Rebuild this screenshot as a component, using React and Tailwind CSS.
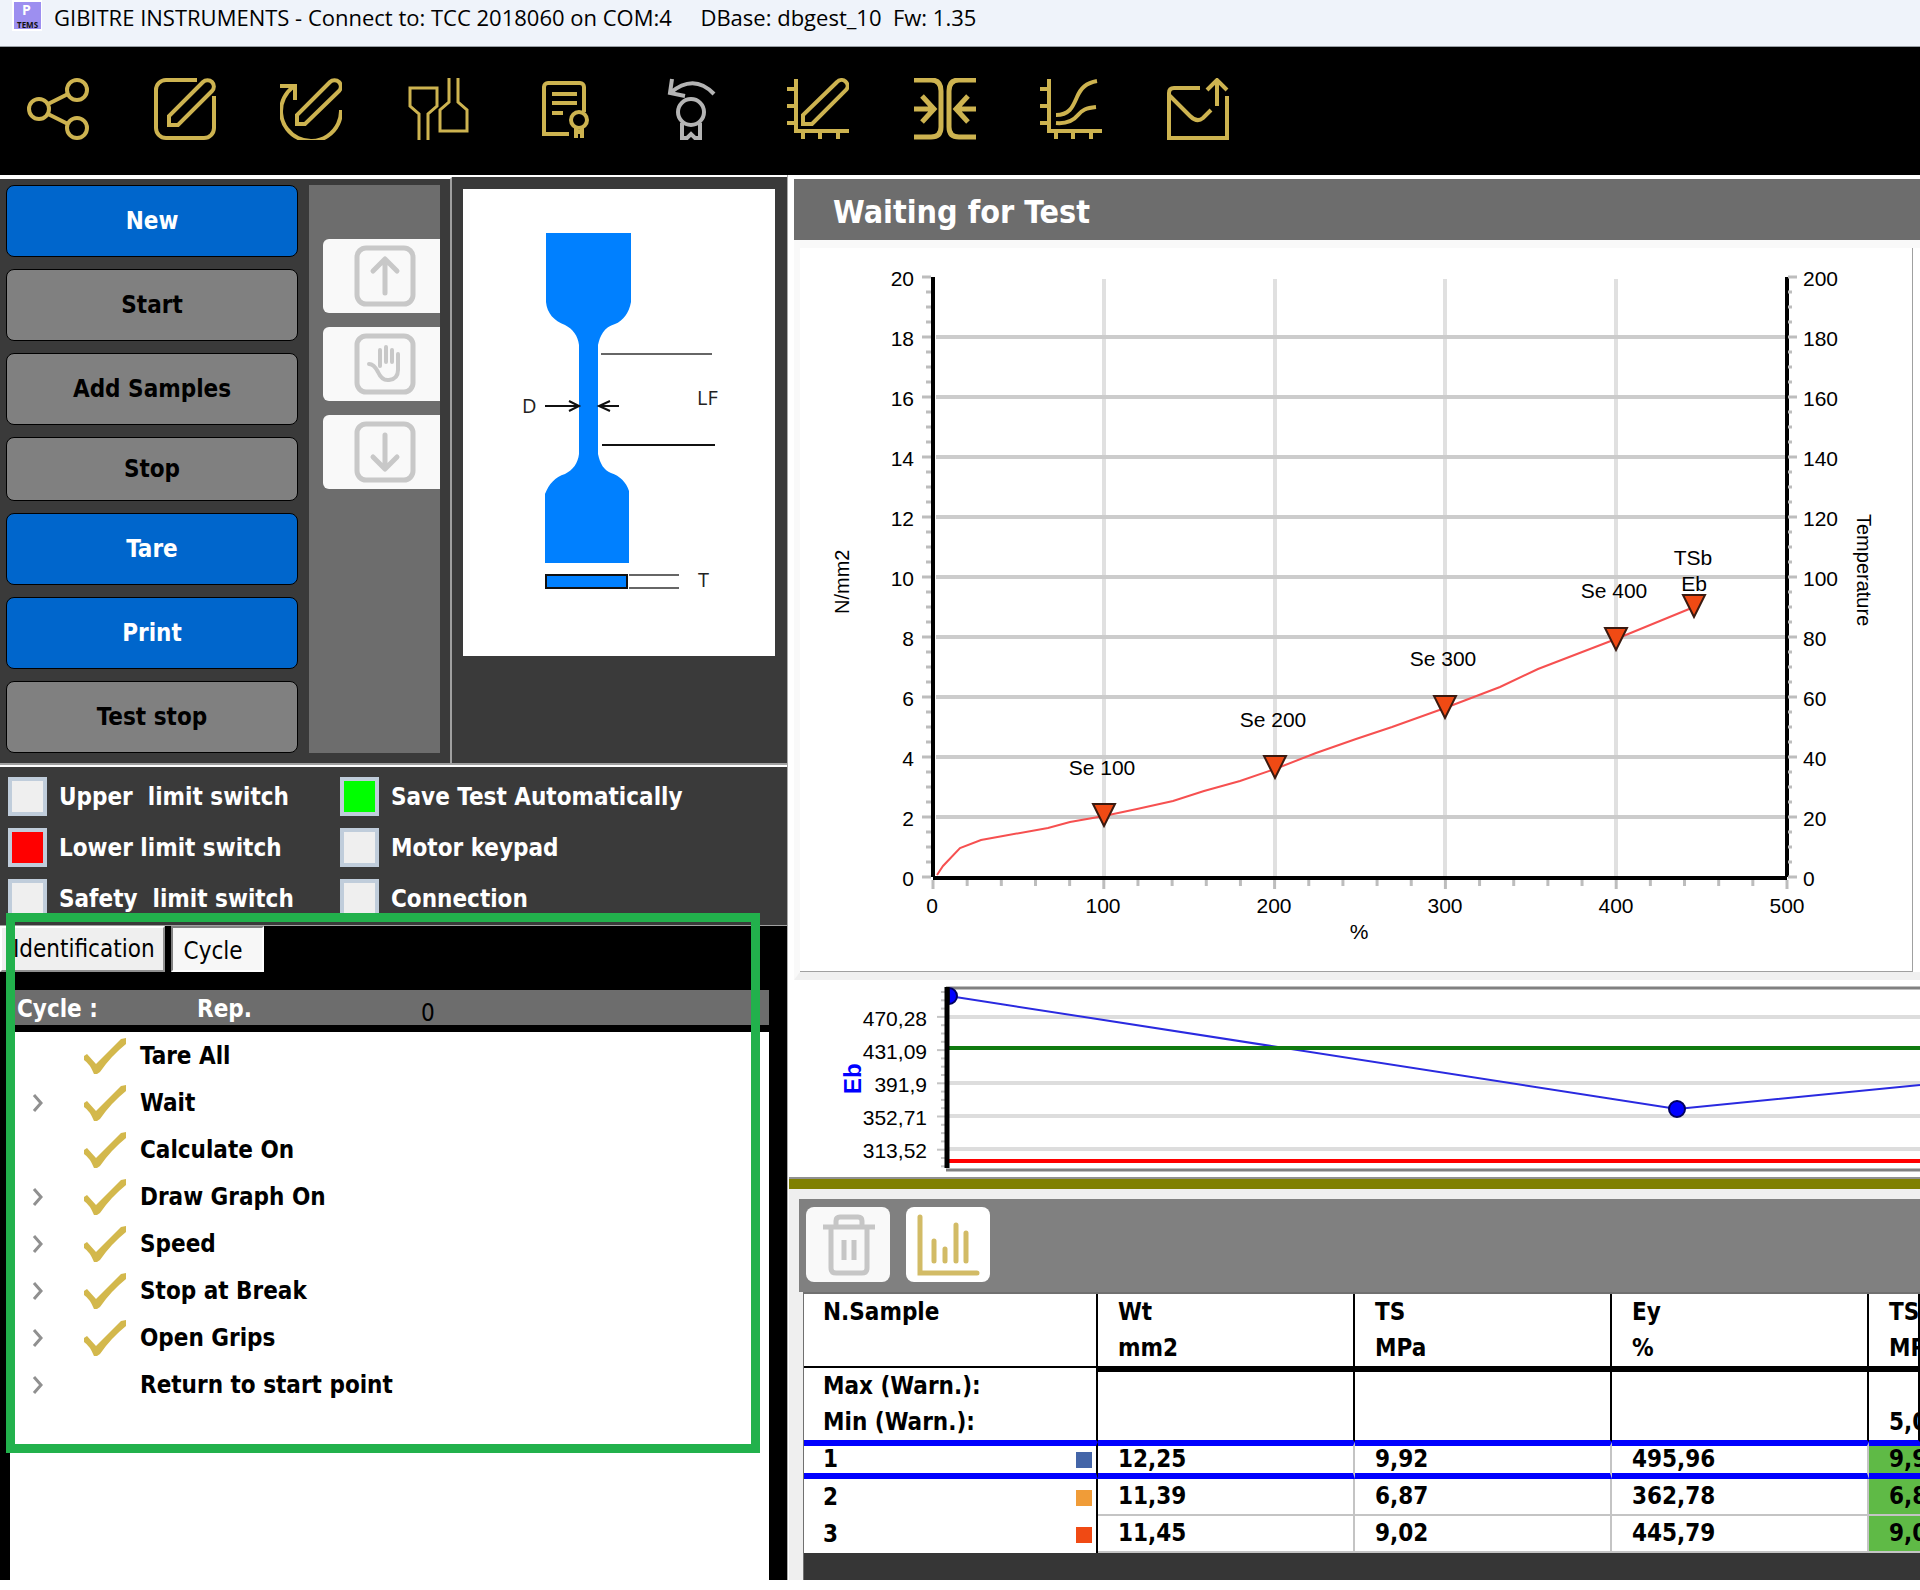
import { useState } from "react";

const commands = [
  { label: "New", primary: true },
  { label: "Start" },
  { label: "Add Samples" },
  { label: "Stop", small: true },
  { label: "Tare", primary: true },
  { label: "Print", primary: true },
  { label: "Test stop" },
];

const steps = [
  { label: "Tare All", done: true },
  { label: "Wait", done: true, children: true },
  { label: "Calculate On", done: true },
  { label: "Draw Graph On", done: true, children: true },
  { label: "Speed", done: true, children: true },
  { label: "Stop at Break", done: true, children: true },
  { label: "Open Grips", done: true, children: true },
  { label: "Return to start point", children: true },
];

const samples = [
  { id: 1, color: "bg-[#4465a8]", values: ["12,25", "9,92", "495,96"], tsb: "9,92" },
  { id: 2, color: "bg-[#f09c38]", values: ["11,39", "6,87", "362,78"], tsb: "6,87" },
  { id: 3, color: "bg-[#f04a14]", values: ["11,45", "9,02", "445,79"], tsb: "9,02" },
];

const axes = (
  <path d="M9 1V53H62M0 11H9M0 28H9M0 45H9M16 53V61M33 53V61M51 53V61" />
);

const tools = [
  {
    name: "Share",
    width: 4,
    art: (
      <>
        <circle cx="12" cy="31" r="10" />
        <circle cx="50" cy="12" r="10" />
        <circle cx="50" cy="50" r="10" />
        <path d="M21 26L41 16M21 36L41 46" />
      </>
    ),
  },
  {
    name: "Edit",
    width: 4,
    art: (
      <>
        <path d="M43 2H12A10 10 0 0 0 2 12V50A10 10 0 0 0 12 60H50A10 10 0 0 0 60 50V18" />
        <path d="M15 47V38L49 4A6 6 0 0 1 58 13L24 47Z" />
      </>
    ),
  },
  {
    name: "Repeat edit",
    width: 4,
    art: (
      <>
        <path d="M0 8H15V22M13 9A30 30 0 1 0 61 32" />
        <path d="M17 46V37L50 4A6 6 0 0 1 59 13L25 46Z" />
      </>
    ),
  },
  {
    name: "Grips",
    width: 3,
    art: (
      <>
        <path d="M12 62V36L3 28V10H30V28L21 36V62" />
        <path d="M42 0V24L33 32V53H60V32L51 24V0" />
      </>
    ),
  },
  {
    name: "Certificate",
    width: 4,
    art: (
      <>
        <path d="M35 56H10V9A4 4 0 0 1 14 5H46A4 4 0 0 1 50 9V34" />
        <path d="M18 16H43M18 25H43M18 35H29" />
        <circle cx="45" cy="42" r="8" />
        <path d="M42 50V60M48 50V60M42 54H48" />
      </>
    ),
  },
  {
    name: "Restore",
    width: 4,
    muted: true,
    art: (
      <>
        <circle cx="31" cy="34" r="13" />
        <path d="M22 45V60H27L31 56L35 60H40V45M12 1L10 15L25 18M10 15Q34 -5 54 16" />
      </>
    ),
  },
  {
    name: "Draw graph",
    width: 4,
    art: (
      <>
        {axes}
        <path d="M16 46V37L50 4A6 6 0 0 1 59 12L25 46Z" />
      </>
    ),
  },
  {
    name: "Close grips",
    width: 5,
    art: (
      <path d="M0 2H17Q27 2 27 13V49Q27 59 17 59H0M62 2H45Q35 2 35 13V49Q35 59 45 59H62M0 31H20M8 18L20 31L8 44M62 31H42M54 18L42 31L54 44" />
    ),
  },
  {
    name: "Curves",
    width: 4,
    art: (
      <>
        {axes}
        <path d="M16 37C30 37 33 28 37 19S46 5 57 3M16 45C28 46 34 42 38 37S46 30 56 29" />
      </>
    ),
  },
  {
    name: "Send",
    width: 4,
    art: (
      <>
        <path d="M33 10H7Q2 10 2 15V60H60V18" />
        <path d="M2 17L23 38Q30 45 36 40L44 32M50 28V3M40 12L50 2L60 12" />
      </>
    ),
  },
];

const points = [
  { x: 1104, y: 805, lx: 1102, ly: 776, label: "Se 100" },
  { x: 1275, y: 757, lx: 1273, ly: 728, label: "Se 200" },
  { x: 1445, y: 697, lx: 1443, ly: 667, label: "Se 300" },
  { x: 1616, y: 629, lx: 1614, ly: 599, label: "Se 400" },
  { x: 1694, y: 596, lx: 1694, ly: 592, label: "Eb" },
];

const range = (n) => Array.from({ length: n }, (_, i) => i);

function Specimen() {
  return (
    <svg viewBox="0 0 312 467" className="block h-[467px] w-[312px] bg-white">
      <path
        d="M83 44H168V113C166 124 160 132 152 135C141 138 137 147 135 156V265C137 275 141 281 148 284C157 287 163 293 166 302V374H82V305C86 295 92 288 102 285C110 281 115 274 116 265V156C115 147 110 140 102 136C91 132 84 124 83 113Z"
        fill="#0080ff"
      />
      <rect x="83" y="386" width="81" height="13" fill="#0080ff" stroke="#111" strokeWidth="2" />
      <path d="M166 386H216M166 399H216M138 165H249" stroke="#666" strokeWidth="2" />
      <path d="M139 256H252M82 217H115M106 212L116 217L106 222M156 217H137M147 212L136 217L147 222" fill="none" stroke="#111" strokeWidth="2" />
      <g className="font-['Open_Sans',sans-serif] text-[20px]" fill="#222">
        <text x="59" y="224">D</text>
        <text x="234" y="216">LF</text>
        <text x="235" y="398">T</text>
      </g>
    </svg>
  );
}

function StressChart() {
  return (
    <svg viewBox="800 249 1112 723" className="block w-full font-['Liberation_Sans',sans-serif] text-[21px]">
      {/* grid */}
      {[1104, 1275, 1445, 1616].map((x) => (
        <path key={x} d={`M${x} 280V878`} stroke="#e0e0e0" strokeWidth="4" />
      ))}
      {range(9).map((i) => (
        <path key={i} d={`M936 ${818 - i * 60}H1786`} stroke="#cccccc" strokeWidth="4" />
      ))}

      {/* axes */}
      <path d="M933 278V878M1787 278V878" stroke="#000" strokeWidth="4" />
      <path d="M933 879H1787" stroke="#000" strokeWidth="4" />
      {range(41).map((i) => {
        const y = 878 - i * 15;
        const major = i % 4 === 0;
        return (
          <path
            key={i}
            d={major ? `M922 ${y}H931M1788 ${y}H1797` : `M926 ${y}H931M1788 ${y}H1792`}
            stroke="#bdbdbd"
            strokeWidth="3"
          />
        );
      })}
      {range(26).map((i) => (
        <path
          key={i}
          d={`M${933 + (i * 854) / 25} 881V${i % 5 === 0 ? 890 : 887}`}
          stroke="#bdbdbd"
          strokeWidth="3"
        />
      ))}

      {/* scales */}
      {range(11).map((i) => (
        <g key={i}>
          <text x="914" y={887 - i * 60} textAnchor="end">{i * 2}</text>
          <text x="1803" y={887 - i * 60}>{i * 20}</text>
        </g>
      ))}
      {range(6).map((i) => (
        <text key={i} x={932 + i * 171} y="914" textAnchor="middle">{i * 100}</text>
      ))}
      <text x="1359" y="940" textAnchor="middle">%</text>
      <text transform="translate(849 615) rotate(-90)" className="text-[20px]">N/mm2</text>
      <text transform="translate(1857 515) rotate(90)" className="text-[20px]">Temperature</text>

      {/* curve */}
      <polyline
        points="937,876 943,867 960,849 981,841 1003,837 1048,829 1070,823 1104,817 1137,810 1173,802 1204,792 1240,782 1275,770 1316,754 1356,740 1392,728 1445,709 1500,688 1538,670 1616,640 1694,608"
        fill="none"
        stroke="#f65050"
        strokeWidth="2"
      />
      {points.map((p) => (
        <g key={p.label}>
          <path d={`M${p.x - 11} ${p.y}H${p.x + 11}L${p.x} ${p.y + 22}Z`} fill="#f04a14" stroke="#3a1a10" strokeWidth="2" />
          <text x={p.lx} y={p.ly} textAnchor="middle">{p.label}</text>
        </g>
      ))}
      <text x="1693" y="566" textAnchor="middle">TSb</text>
    </svg>
  );
}

function TrendChart() {
  return (
    <svg viewBox="789 981 1131 197" className="block w-full font-['Liberation_Sans',sans-serif] text-[21px]">
      {[1018, 1084, 1117, 1150].map((y) => (
        <path key={y} d={`M949 ${y}H1920`} stroke="#dddddd" strokeWidth="4" />
      ))}
      <path d="M946 989H1920M946 1171H1920" stroke="#808080" strokeWidth="3" />
      {range(22).map((i) => (
        <path key={i} d={`M${i % 4 === 3 ? 937 : 941} ${993 + i * 8.3}H945`} stroke="#c4c4c4" strokeWidth="2" />
      ))}
      <path d="M949 997L1677 1110L1920 1086" fill="none" stroke="#2a2ae0" strokeWidth="2" />
      <path d="M949 1049H1920" stroke="#0f7a0f" strokeWidth="4" />
      <path d="M949 1162H1920" stroke="#ff0000" strokeWidth="4" />
      <path d="M949 989A8 8 0 0 1 949 1005Z" fill="#0000ff" stroke="#000060" strokeWidth="2" />
      <circle cx="1677" cy="1110" r="8" fill="#0000ff" stroke="#000060" strokeWidth="2" />
      <path d="M947 988V1169" stroke="#000" strokeWidth="5" />
      {["470,28", "431,09", "391,9", "352,71", "313,52"].map((t, i) => (
        <text key={t} x="927" y={1027 + i * 33} textAnchor="end">{t}</text>
      ))}
      <text transform="translate(861 1095) rotate(-90)" className="text-[24px] font-bold" fill="#0000ff">Eb</text>
    </svg>
  );
}

function Indicator({ label, on, color = "checked:bg-[#00ff00]" }) {
  return (
    <label className="flex items-center gap-3 whitespace-pre">
      <input
        type="checkbox"
        defaultChecked={on}
        className={`size-[39px] appearance-none border-4 border-[#c0cddb] bg-[#efefef] ${color}`}
      />
      {label}
    </label>
  );
}

function JogButton({ label, children }) {
  return (
    <button aria-label={label} className="flex h-[74px] w-full items-center rounded-l-md bg-[#f9f9f9] pl-[31px]">
      <svg viewBox="0 0 62 62" className="size-[62px]" fill="none" stroke="#c8c8c8" strokeWidth="5" strokeLinecap="round" strokeLinejoin="round">
        <rect x="3" y="3" width="56" height="56" rx="9" />
        {children}
      </svg>
    </button>
  );
}

export default function App() {
  const [tab, setTab] = useState("Cycle");

  return (
    <div className="flex min-h-screen w-full flex-col overflow-hidden bg-white pb-[10px] font-['DejaVu_Sans_Condensed','Noto_Sans',sans-serif] text-[24px] text-black">

      {/* TITLE BAR */}
      <header className="flex h-[47px] items-start gap-3 border-b border-[#9aa0a6] bg-[#eff3fa] pl-3 font-['Open_Sans',sans-serif] text-[22px]">
        <svg viewBox="0 0 30 31" className="h-[31px] w-[30px]">
          <rect width="30" height="31" fill="#fff" />
          <rect x="2" y="2" width="27" height="27" fill="#9d8ff0" />
          <text x="10" y="15" fill="#fff" className="text-[14px] font-bold">P</text>
          <text x="5" y="28" fill="#111" className="text-[8px] font-bold">TEMS</text>
        </svg>
        <h1 className="whitespace-pre leading-[34px]">
          GIBITRE INSTRUMENTS - Connect to: TCC 2018060 on COM:4     DBase: dbgest_10  Fw: 1.35
        </h1>
      </header>

      {/* TOOLBAR */}
      <nav className="h-32 bg-black pl-[27px] pt-[31px]">
        <div className="flex w-[1202px] justify-between">
          {tools.map((t) => (
            <button key={t.name} aria-label={t.name} className={t.muted ? "text-[#b4b4b4]" : "text-[#cdb350]"}>
              <svg viewBox="0 0 62 62" className="size-[62px]" fill="none" stroke="currentColor" strokeWidth={t.width}>
                {t.art}
              </svg>
            </button>
          ))}
        </div>
      </nav>

      <main className="flex flex-1">

        {/* LEFT SIDE */}
        <div className="flex w-[788px] shrink-0 flex-col border-r border-[#a8a8a8] pt-[2px]">
          <div className="flex border-b-2 border-[#a0a0a0]">
            <div className="flex w-[452px] justify-between border-r-2 border-t-2 border-r-[#a0a0a0] border-t-white bg-[#3a3a3a] pb-[10px] pl-[6px] pr-[10px] pt-[6px]">
              <div className="flex w-[292px] flex-col gap-3 font-bold">
                {commands.map((c) => (
                  <button
                    key={c.label}
                    className={`rounded-lg border border-black ${c.small ? "h-16" : "h-[72px]"} ${c.primary ? "bg-[#0066cc] text-white" : "bg-[#808080]"}`}
                  >
                    {c.label}
                  </button>
                ))}
              </div>
              <div className="flex w-[131px] flex-col gap-[14px] bg-[#6d6d6d] pl-[14px] pt-[54px]">
                <JogButton label="Up">
                  <path d="M31 48V15M19 26L31 14L43 26" />
                </JogButton>
                <JogButton label="Hold">
                  <path strokeWidth="4" d="M15 31Q20 31 24 39Q28 48 35 47Q44 46 44 37V21M38 29V17M32 29V14M26 33V17" />
                </JogButton>
                <JogButton label="Down">
                  <path d="M31 14V47M19 36L31 48L43 36" />
                </JogButton>
              </div>
            </div>
            <div className="flex-1 bg-[#3a3a3a] pl-[11px] pt-3">
              <Specimen />
            </div>
          </div>

          {/* LIMIT SWITCHES */}
          <div className="mt-[2px] grid h-[158px] grid-cols-[332px_1fr] content-start gap-y-3 bg-[#3a3a3a] pl-2 pt-[10px] font-bold text-white">
            <Indicator label="Upper  limit switch" />
            <Indicator label="Save Test Automatically" on />
            <Indicator label="Lower limit switch" on color="checked:bg-[#ff0000]" />
            <Indicator label="Motor keypad" />
            <Indicator label="Safety  limit switch" />
            <Indicator label="Connection" />
          </div>

          {/* CYCLE */}
          <div className="relative flex flex-1 flex-col border-t border-[#a0a0a0] bg-black">
            <div className="flex h-[46px] gap-[6px]">
              {["Identification", "Cycle"].map((name) => (
                <button
                  key={name}
                  onClick={() => setTab(name)}
                  className={`border-2 pl-[11px] pr-2 text-left ${
                    tab === name
                      ? "w-[93px] border-b-white border-l-[#808080] border-r-white border-t-[#808080] bg-[#f7f7f7] pt-[3px]"
                      : "border-b-[#909090] border-l-white border-r-[#909090] border-t-white bg-[#efefef]"
                  }`}
                >
                  {name}
                </button>
              ))}
            </div>
            <div className="ml-[10px] mr-[18px] mt-[18px] flex h-[35px] items-center bg-[#6d6d6d] pl-[7px] pt-[3px] font-bold text-white">
              <span className="w-[180px]">Cycle :</span>
              <span className="w-[224px]">Rep.</span>
              <span className="pt-2 font-normal text-black">0</span>
            </div>
            <ul className="ml-[10px] mr-[18px] mt-[7px] flex-1 bg-white font-bold">
              {steps.map((s) => (
                <li key={s.label} className="flex h-[47px] items-center pl-[22px]">
                  <span className="flex w-[51px]">
                    {s.children && (
                      <button aria-label={`Expand ${s.label}`}>
                        <svg viewBox="0 0 14 20" className="h-5 w-[14px]" fill="none" stroke="#909090" strokeWidth="3">
                          <path d="M2 2L9 10L2 18" />
                        </svg>
                      </button>
                    )}
                  </span>
                  <span className="w-[57px]">
                    {s.done && (
                      <svg viewBox="0 0 44 36" className="h-9 w-11" fill="#d3b84c">
                        <path d="M1 18L4 16L13 26L38 1L43 0V6Q28 18 17 34L14 36H11Q7 26 1 22Z" />
                      </svg>
                    )}
                  </span>
                  {s.label}
                </li>
              ))}
            </ul>
            <div className="pointer-events-none absolute -top-[13px] left-[6px] h-[540px] w-[754px] border-[9px] border-[#22b14c]" />
          </div>
        </div>

        {/* RIGHT SIDE */}
        <div className="flex min-w-0 flex-1 flex-col pl-px">
          <div className="pl-[5px] pt-1">
            <h2 className="h-[61px] bg-[#6d6d6d] pl-[39px] text-[32px] font-bold leading-[66px] text-white">
              Waiting for Test
            </h2>
          </div>
          <div className="ml-[5px] border-b-8 border-l-[6px] border-t-8 border-b-[#f0f0f0] border-l-[#f9f9f9] border-t-[#f9f9f9] pr-[7px]">
            <div className="border-b border-r border-[#a0a0a0]">
              <StressChart />
            </div>
          </div>
          <TrendChart />
          <div className="h-3 border-t-2 border-[#909090] bg-[#808000]" />

          <section className="flex flex-1 flex-col bg-[#efefef] pl-[10px] pt-[10px]">
            <div className="flex h-[93px] items-start gap-4 bg-[#808080] pl-[7px] pt-2">
              <button aria-label="Delete" className="rounded-lg bg-[#f9f9f9]">
                <svg viewBox="806 1207 84 75" className="h-[75px] w-[84px]" fill="none" stroke="#c6c6c6" strokeWidth="5">
                  <path d="M823 1227H875M836 1227V1221Q836 1217 840 1217H858Q862 1217 862 1221V1227M831 1227V1268Q831 1273 836 1273H862Q867 1273 867 1268V1227M844 1240V1260M854 1240V1260" />
                </svg>
              </button>
              <button aria-label="Statistics" className="rounded-lg bg-white">
                <svg viewBox="905 1207 84 75" className="h-[75px] w-[84px]" fill="none" stroke="#d2bb66" strokeWidth="5" strokeLinecap="round">
                  <path d="M919 1217V1273H976M933 1241V1261M944 1249V1261M955 1225V1261M965 1233V1261" />
                </svg>
              </button>
            </div>

            {/* RESULTS */}
            <div className="ml-1 flex-1 border-l border-t-2 border-[#707070] bg-[#363636]">
              <table className="w-full table-fixed border-separate border-spacing-0 whitespace-nowrap bg-white text-left font-bold">
                <colgroup>
                  <col className="w-[294px]" />
                  <col className="w-[257px]" />
                  <col className="w-[257px]" />
                  <col className="w-[257px]" />
                  <col />
                </colgroup>
                <thead className="leading-[36px]">
                  <tr className="h-[74px]">
                    <th className="border-b-2 border-r-2 border-black p-0 pl-[19px] align-top">N.Sample</th>
                    {[["Wt", "mm2"], ["TS", "MPa"], ["Ey", "%"], ["TSb", "MPa"]].map(([name, unit]) => (
                      <th key={name} className="overflow-hidden border-b-2 border-r-2 border-black p-0 pl-5">
                        {name}
                        <br />
                        {unit}
                      </th>
                    ))}
                  </tr>
                  <tr className="h-[74px]">
                    <th className="border-b-2 border-r-2 border-b-[#0000ff] border-r-black p-0 pl-[19px]">
                      Max (Warn.):
                      <br />
                      Min (Warn.):
                    </th>
                    {["", "", "", "5,00"].map((v, i) => (
                      <td key={i} className="overflow-hidden border-b-2 border-r-2 border-t-4 border-b-[#0000ff] border-r-black border-t-black p-0 pl-5 align-bottom">
                        {v}
                      </td>
                    ))}
                  </tr>
                </thead>
                <tbody>
                  {samples.map((s) => {
                    const edge = s.id === 1
                      ? "border-t-4 border-b-6 border-t-[#0000ff] border-b-[#0000ff] leading-[27px]"
                      : "leading-[35px]";
                    const line = s.id === 1 ? "" : "border-b-2 border-b-[#c4c4c4]";
                    return (
                      <tr key={s.id} className="h-[37px]">
                        <th className={`border-r-2 border-r-black p-0 pl-[19px] ${edge}`}>
                          <div className="flex items-center justify-between pr-1">
                            {s.id}
                            <span className={`size-4 ${s.color}`} />
                          </div>
                        </th>
                        {s.values.map((v, i) => (
                          <td key={i} className={`border-r-2 border-r-[#c4c4c4] p-0 pl-5 ${edge} ${line}`}>{v}</td>
                        ))}
                        <td className={`overflow-hidden bg-[#5fba46] p-0 pl-5 ${edge} ${line}`}>{s.tsb}</td>
                      </tr>
                    );
                  })}
                </tbody>
              </table>
            </div>
          </section>
        </div>
      </main>
    </div>
  );
}
